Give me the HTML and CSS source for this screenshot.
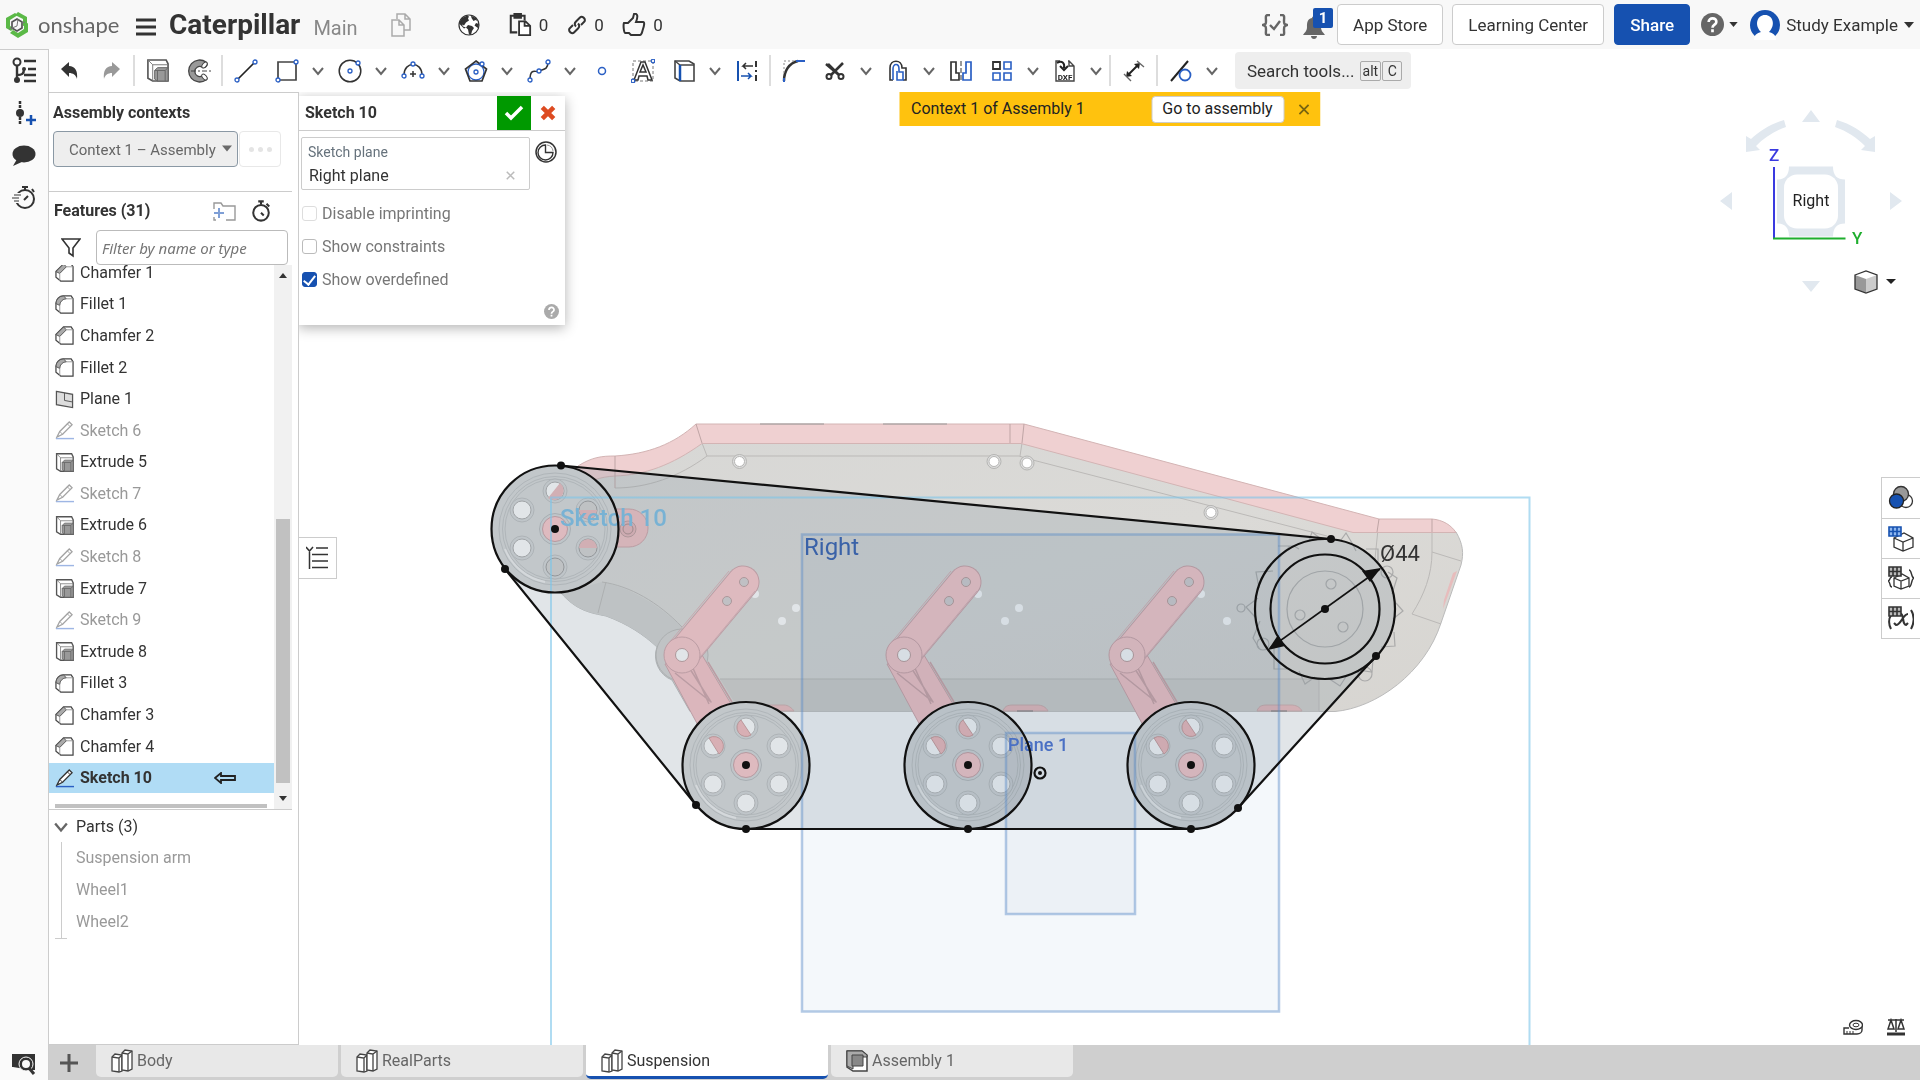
FILE: index.html
```html
<!DOCTYPE html>
<html lang="en">
<head>
<meta charset="utf-8">
<title>Caterpillar | Suspension</title>
<link rel="stylesheet" href="styles.css">
</head>
<body>
<svg class="sprite" aria-hidden="true">
  <symbol id="i-chev" viewBox="0 0 12 12"><path d="M1 3l5 6 5-6" fill="none" stroke="#666" stroke-width="2"/></symbol>
  <symbol id="i-caret" viewBox="0 0 10 6"><path d="M0 0h10L5 6z" fill="#333"/></symbol>
  <symbol id="i-x" viewBox="0 0 12 12"><path d="M1 1l10 10M11 1L1 11" fill="none" stroke="currentColor" stroke-width="2"/></symbol>
  <symbol id="i-extrude" viewBox="0 0 24 24"><path d="M2 1h19l2 4v18H7l-5-3z" fill="#fff" stroke="#555" stroke-width="1.700"/><path d="M2 1l5 5v17M7 6h16" fill="none" stroke="#777"/><path d="M9 12l3-3h11v14H12l-3-2z" fill="#999" stroke="#666"/><path d="M9 12h11v11M20 12l3-3M12 23V12" fill="none" stroke="#666"/></symbol>
  <symbol id="i-fillet" viewBox="0 0 20 20"><path d="M1 9a8 8 0 0 1 8-8h8l2 3v15H6l-5-4z" fill="#fff" stroke="#444" stroke-width="1.300"/><path d="M1 9a8 8 0 0 1 8-8l3 3a7 7 0 0 0-7 7z" fill="#aaa" stroke="#555"/><path d="M12 4h7M5 11v8" fill="none" stroke="#999"/></symbol>
  <symbol id="i-chamfer" viewBox="0 0 20 20"><path d="M1 9l8-8h8l2 3v15H6l-5-4z" fill="#fff" stroke="#444" stroke-width="1.300"/><path d="M1 9l8-8 3 3-7 7z" fill="#aaa" stroke="#555"/><path d="M12 4h7M5 11v8" fill="none" stroke="#999"/></symbol>
  <symbol id="i-plane" viewBox="0 0 20 20"><path d="M1.500 1.500l17 3v14l-17-3z" fill="#ddd" stroke="#555" stroke-width="1.300"/><path d="M10 3v8l8 1.500" fill="none" stroke="#555"/></symbol>
  <symbol id="i-sketch" viewBox="0 0 20 20"><path d="M1 18.500h19" stroke="#2a5fc4" stroke-width="1.500"/><path d="M2 17l3-6L15 1l3 3L8 14z" fill="#fff" stroke="#333" stroke-width="1.300"/><path d="M5 11l3 3M13 3l3 3" stroke="#333"/></symbol>
  <symbol id="i-studio" viewBox="0 0 24 24"><path d="M2 8l3-3 7 1v16l-3 1-7-1z" fill="#fff" stroke="#444" stroke-width="1.300"/><path d="M2 8l7 1v14M9 9l3-3" fill="none" stroke="#444" stroke-width="1.300"/><path d="M12 4l3-3 7 1v18l-4 2-6-1z" fill="#fff" stroke="#444" stroke-width="1.300"/><path d="M12 4l6 1v17M18 5l4-3" fill="none" stroke="#444" stroke-width="1.300"/></symbol>
  <symbol id="i-watch" viewBox="0 0 24 24"><circle cx="12" cy="14" r="8.500" fill="none" stroke="#333" stroke-width="2.200"/><path d="M9 1.500h6M12 2v3M18 4l3 3M12 14l3 3" stroke="#333" stroke-width="2.200" fill="none"/></symbol>
  <symbol id="i-help" viewBox="0 0 24 24"><circle cx="12" cy="12" r="12" fill="currentColor"/><path d="M8 9.500c0-5.500 8.500-5 8 0 0 3-4 2.500-4 6M12 17v3" fill="none" stroke="#fff" stroke-width="2.800"/></symbol>
</svg>

<header class="top">
  <a class="logo" href="#">
    <svg width="26" height="28" viewBox="0 0 26 28"><path d="M11 2L2 7v10l5 3 3-3-4-2V9l8-5z" fill="#5bb947"/><path d="M14 1l9 5v8l-4 1V8l-8-4z" fill="#5bb947"/><path d="M24 12v9l-10 6-8-5 3-3 5 3 6-4v-4z" fill="#5bb947"/><path d="M8 11l5-3 5 3v6l-5 3-5-3z" fill="none" stroke="#555" stroke-width="1.700"/><path d="M8 17l5-2 1-7M5 18l4-1M18 12l3-1" fill="none" stroke="#777"/></svg>
    <span>onshape</span>
  </a>
  <button class="bare menu" aria-label="Menu"><svg width="20" height="20" viewBox="0 0 20 20"><path d="M0 3h20M0 10h20M0 17h20" stroke="#333" stroke-width="3"/></svg></button>
  <h1>Caterpillar</h1><span class="branch">Main</span>
  <button class="bare copy" aria-label="Copy"><svg width="22" height="24" viewBox="0 0 22 24"><path d="M7 6V1h8l5 5v11h-6M15 1v5h5M2 7h7l5 5v11H2zM9 7v5h5" fill="none" stroke="#aaa" stroke-width="1.500"/></svg></button>
  <svg class="globe" width="22" height="22" viewBox="0 0 22 22"><circle cx="11" cy="11" r="10" fill="#fff" stroke="#333" stroke-width="1.200"/><path d="M1.500 8L4 4l5-2.500 2 1-1 2 1 2-3 2-2 3-2-1 1 2 3 1-2 1-4-4zM13 1.500l5 2.500 1.500 3-2-1-2 1-2-3zM10 11l4 1 2 2-2 3-1 4-2-.5-1-5-2-2zM18 9l3 1-1 4-1.500-1-2-1.500z" fill="#333"/></svg>
  <span class="stat"><svg width="24" height="24" viewBox="0 0 24 26"><path d="M17 8V3H2v18h7M6 1h7v4H6z" fill="none" stroke="#333" stroke-width="2.200"/><path d="M11 9h7l5 5v10H11zM17 9v5h5" fill="#fff" stroke="#333" stroke-width="2"/></svg>0</span>
  <span class="stat link"><svg width="20" height="20" viewBox="0 0 20 20"><path d="M9 11.500c-2-2-1-4 0-5l4-4c2-2 6 1 4.500 4L14 10M11 8.500c2 2 1 4 0 5l-4 4c-2 2-6-1-4.500-4L6 10" fill="none" stroke="#333" stroke-width="2"/></svg>0</span>
  <span class="stat"><svg width="24" height="24" viewBox="0 0 24 24"><path d="M2 10h4l5-5 1-4c4-1 4 3 2 8h7c2 0 1 4 0 7s-1 6-3 6H9l-2-2H3c-1 0-2-8-1-10z" fill="none" stroke="#333" stroke-width="2"/></svg>0</span>
  <div class="account">
    <svg width="26" height="22" viewBox="0 0 26 22"><path d="M8 1H6C3 1 4 4 4 7s0 3-3 4c3 1 3 2 3 5s-1 5 2 5h2M18 1h2c3 0 2 3 2 6s0 3 3 4c-3 1-3 2-3 5s1 5-2 5h-2M8 11l4 4 6-8" fill="none" stroke="#666" stroke-width="2.400"/></svg>
    <button class="bare bell" aria-label="Notifications"><svg width="22" height="24" viewBox="0 0 22 24"><path d="M11 1c1 0 2 1 2 2 5 1 5 5 5 9s2 5 4 8H0c2-3 4-4 4-8s0-8 5-9c0-1 1-2 2-2zM8 21h6c0 4-6 4-6 0z" fill="#666"/></svg><b>1</b></button>
    <button class="btn">App Store</button>
    <button class="btn learn">Learning Center</button>
    <button class="btn share">Share</button>
    <button class="bare help" aria-label="Help"><svg width="23" height="23"><use href="#i-help"/></svg><svg width="9" height="5"><use href="#i-caret"/></svg></button>
    <button class="bare user"><svg width="30" height="30" viewBox="0 0 30 30"><circle cx="15" cy="15" r="15" fill="#1651b0"/><path d="M4 30c0-5 3-7 7-8-7-7-4-17 4-17s11 10 4 17c4 1 7 3 7 8z" fill="#fff"/></svg><span>Study Example</span><svg width="10" height="6"><use href="#i-caret"/></svg></button>
  </div>
</header>

<div class="body">
  <nav class="rail" aria-label="Side tools">
    <button class="bare" aria-label="Feature tree"><svg width="26" height="26" viewBox="0 0 26 26"><circle cx="6" cy="5" r="3.500" fill="none" stroke="#333" stroke-width="2"/><path d="M6 8v14M6 18c5 0 7-1 7-6M13 4h12M17 12h8M13 18h12M13 24h12" fill="none" stroke="#333" stroke-width="2.400"/><circle cx="13" cy="12" r="2" fill="#333"/><circle cx="6" cy="23" r="3" fill="#333"/></svg></button>
    <button class="bare" aria-label="Insert version"><svg width="24" height="24" viewBox="0 0 24 24"><path d="M8 0v24" stroke="#333" stroke-width="2.500" stroke-dasharray="3 1"/><circle cx="8" cy="12" r="4" fill="#333"/><path d="M14 19h10M19 14v10" stroke="#1651b0" stroke-width="2.500"/></svg></button>
    <button class="bare" aria-label="Comments"><svg width="24" height="24" viewBox="0 0 24 24"><ellipse cx="12" cy="11" rx="11.500" ry="8.500" fill="#333"/><path d="M5 16l-4 7 11-5z" fill="#333"/></svg></button>
    <button class="bare" aria-label="History"><svg width="24" height="24" viewBox="0 0 24 24"><circle cx="13" cy="14" r="9" fill="none" stroke="#333" stroke-width="2"/><path d="M10 2h6M13 2v3M20 4l2 3M12 15l4-4" stroke="#333" stroke-width="2"/><path d="M2 10h7M0 13h7M2 16h5" stroke="#fafafa" stroke-width="4"/><path d="M2 10h7M0 13h7M2 16h5" stroke="#333"/></svg></button>
    <button class="bare last" aria-label="Search document"><svg width="24" height="22" viewBox="0 0 24 22"><path d="M1 14V2h21v14h-9" fill="#333" stroke="#333" stroke-width="2"/><circle cx="14" cy="11" r="7" fill="#333" stroke="#fafafa"/><circle cx="14" cy="11" r="5" fill="#fafafa" stroke="#333" stroke-width="2"/><path d="M17 15l5 6" stroke="#333" stroke-width="3"/></svg></button>
  </nav>

  <div class="main">
    <div class="toolbar" role="toolbar" aria-label="Sketch tools">
      <button class="t" aria-label="Undo"><svg width="20" height="20" viewBox="0 0 20 20"><path d="M1 8l8-7v4c6 0 9 5 8 13-1-4-4-6-8-6v4z" fill="#333"/></svg></button>
      <button class="t" aria-label="Redo"><svg width="20" height="20" viewBox="0 0 20 20"><path d="M19 8l-8-7v4C5 5 2 10 3 18c1-4 4-6 8-6v4z" fill="#999"/></svg></button>
      <i class="div"></i>
      <button class="t" aria-label="Extrude"><svg width="23" height="23"><use href="#i-extrude"/></svg></button>
      <button class="t" aria-label="Revolve"><svg width="24" height="24" viewBox="0 0 24 24"><path d="M19 3A11 11 0 1 0 19 21C21 19 18 15 15 17A5 5 0 1 1 15 8C18 10 22 6 19 3z" fill="#999" stroke="#444" stroke-width="1.300"/><ellipse cx="17.500" cy="6" rx="2" ry="3.500" transform="rotate(40 17.500 6)" fill="#fff" stroke="#444"/><ellipse cx="17.500" cy="18" rx="2" ry="3.500" transform="rotate(-40 17.500 18)" fill="#fff" stroke="#444"/><path d="M4 12h20" fill="none" stroke="#444" stroke-dasharray="5 2 2 2"/></svg></button>
      <i class="div"></i>
      <button class="t" aria-label="Line"><svg width="24" height="24" viewBox="0 0 24 24"><path d="M4 20L20 4" stroke="#222" stroke-width="1.700"/><g fill="#fff" stroke="#2a5fc4" stroke-width="1.300"><circle cx="3" cy="21" r="2"/><circle cx="21" cy="3" r="2"/></g></svg></button>
      <button class="t" aria-label="Rectangle"><svg width="24" height="24" viewBox="0 0 24 24"><path d="M3 3h18v18H3z" fill="none" stroke="#444" stroke-width="1.700"/><g fill="#fff" stroke="#2a5fc4" stroke-width="1.300"><circle cx="3" cy="21" r="2"/><circle cx="21" cy="3" r="2"/></g></svg></button>
      <button class="c" aria-label="Rectangle options"><svg width="12" height="12"><use href="#i-chev"/></svg></button>
      <button class="t" aria-label="Circle"><svg width="24" height="24" viewBox="0 0 24 24"><circle cx="12" cy="12" r="10.800" fill="none" stroke="#333" stroke-width="1.500"/><g fill="#fff" stroke="#2a5fc4" stroke-width="1.300"><circle cx="12" cy="12" r="2"/><circle cx="20" cy="4" r="2"/></g></svg></button>
      <button class="c" aria-label="Circle options"><svg width="12" height="12"><use href="#i-chev"/></svg></button>
      <button class="t" aria-label="Arc"><svg width="24" height="24" viewBox="0 0 24 24"><path d="M3 16C3 2 21 2 21 16M12 12v6M9 15h6" fill="none" stroke="#333" stroke-width="1.500"/><g fill="#fff" stroke="#2a5fc4" stroke-width="1.300"><circle cx="3" cy="17" r="2"/><circle cx="21" cy="17" r="2"/><circle cx="12" cy="5" r="2"/></g></svg></button>
      <button class="c" aria-label="Arc options"><svg width="12" height="12"><use href="#i-chev"/></svg></button>
      <button class="t" aria-label="Polygon"><svg width="24" height="24" viewBox="0 0 24 24"><circle cx="12" cy="13" r="8" fill="none" stroke="#2a5fc4" stroke-width="1.300"/><path d="M12 2l10.500 8L18 22H6L1.500 10z" fill="none" stroke="#333" stroke-width="1.700"/><g fill="#fff" stroke="#2a5fc4" stroke-width="1.300"><circle cx="12" cy="13" r="2"/><circle cx="18" cy="5" r="2"/></g></svg></button>
      <button class="c" aria-label="Polygon options"><svg width="12" height="12"><use href="#i-chev"/></svg></button>
      <button class="t" aria-label="Spline"><svg width="24" height="24" viewBox="0 0 24 24"><path d="M3 21C3 8 9 14 12 12s9 0 9-9" fill="none" stroke="#333" stroke-width="1.500"/><g fill="#fff" stroke="#2a5fc4" stroke-width="1.300"><circle cx="3" cy="21" r="2"/><circle cx="12" cy="12" r="2"/><circle cx="21" cy="3" r="2"/></g></svg></button>
      <button class="c" aria-label="Spline options"><svg width="12" height="12"><use href="#i-chev"/></svg></button>
      <button class="t" aria-label="Point"><svg width="24" height="24" viewBox="0 0 24 24"><circle cx="12" cy="12" r="3.500" fill="none" stroke="#2a5fc4" stroke-width="1.500"/></svg></button>
      <button class="t" aria-label="Text"><svg width="24" height="24" viewBox="0 0 24 24"><path d="M2 2h20v20H2z" fill="none" stroke="#777" stroke-dasharray="3 2"/><path d="M3 21L10 3h4l7 18h-4l-1-4H8l-1 4zM9 13h6l-3-7z" fill="#fff" stroke="#333" stroke-width="1.500"/><g fill="#fff" stroke="#2a5fc4" stroke-width="1.300"><circle cx="2" cy="22" r="1.800"/><circle cx="22" cy="2" r="1.800"/></g></svg></button>
      <button class="t" aria-label="Use edges"><svg width="22" height="24" viewBox="0 0 22 24"><path d="M2 2h14l5 3v17H7l-5-3z" fill="#fff" stroke="#444" stroke-width="1.600"/><path d="M2 2l5 4h14" fill="none" stroke="#444" stroke-width="1.300"/><path d="M7 6v16" stroke="#1651b0" stroke-width="2.500"/></svg></button>
      <button class="c" aria-label="Use options"><svg width="12" height="12"><use href="#i-chev"/></svg></button>
      <button class="t" aria-label="Construction"><svg width="22" height="24" viewBox="0 0 22 24"><path d="M2 2v20" stroke="#1651b0" stroke-width="2"/><path d="M20 2v20" stroke="#333" stroke-width="2" stroke-dasharray="6 3 2 3"/><path d="M17 7H7l3-3M7 7l3 3" fill="none" stroke="#333" stroke-width="1.500"/><path d="M5 17h10l-3-3M15 17l-3 3" fill="none" stroke="#1651b0" stroke-width="1.500"/></svg></button>
      <i class="div"></i>
      <button class="t" aria-label="Sketch fillet"><svg width="24" height="24" viewBox="0 0 24 24"><path d="M2 22C2 12 7 4 16 2" fill="none" stroke="#333" stroke-width="2.500"/><path d="M14 2h9M2 19v4" stroke="#2a5fc4" stroke-width="2"/><path d="M2 14V2h10" fill="none" stroke="#888" stroke-dasharray="2 2"/></svg></button>
      <button class="t" aria-label="Trim"><svg width="20" height="20" viewBox="0 0 20 20"><path d="M1 3l13 11M6 14L18 2M3 3l11 11" stroke="#333" stroke-width="2.600"/><circle cx="4" cy="15.500" r="2.500" fill="#fff" stroke="#333" stroke-width="2"/><circle cx="16" cy="15.500" r="2.500" fill="#fff" stroke="#333" stroke-width="2"/></svg></button>
      <button class="c" aria-label="Trim options"><svg width="12" height="12"><use href="#i-chev"/></svg></button>
      <button class="t" aria-label="Offset"><svg width="20" height="22" viewBox="0 0 20 22"><path d="M5 20H2V8c0-9 12-9 12 0h4v12h-3" fill="none" stroke="#333" stroke-width="1.600"/><path d="M5 20V9c0-6 6-6 6 0v3h4v8H9v-9" fill="none" stroke="#2a5fc4" stroke-width="1.600"/></svg></button>
      <button class="c" aria-label="Offset options"><svg width="12" height="12"><use href="#i-chev"/></svg></button>
      <button class="t" aria-label="Mirror"><svg width="24" height="24" viewBox="0 0 24 24"><path d="M2 3h5v11h3v7H2z" fill="none" stroke="#333" stroke-width="1.700"/><path d="M12 2v20" stroke="#333" stroke-dasharray="5 2"/><path d="M22 3h-5v11h-3v7h8z" fill="none" stroke="#2a5fc4" stroke-width="1.700"/></svg></button>
      <button class="t" aria-label="Pattern"><svg width="22" height="22" viewBox="0 0 22 22"><path d="M2 2h7v7H2z" fill="none" stroke="#333" stroke-width="1.800"/><path d="M13 2h7v7h-7zM2 13h7v7H2zM13 13h7v7h-7z" fill="none" stroke="#2a5fc4" stroke-width="1.600"/></svg></button>
      <button class="c" aria-label="Pattern options"><svg width="12" height="12"><use href="#i-chev"/></svg></button>
      <button class="t" aria-label="Import DXF"><svg width="22" height="24" viewBox="0 0 22 24"><path d="M6 2H2v20h18V7l-5-5h-1M15 2v5h5" fill="none" stroke="#444" stroke-width="1.400"/><path d="M3 4c5-3 8 0 7 5M6 7l4 4 4-4" fill="none" stroke="#222" stroke-width="2"/><text x="11" y="21" text-anchor="middle" class="dxf">DXF</text></svg></button>
      <button class="c" aria-label="DXF options"><svg width="12" height="12"><use href="#i-chev"/></svg></button>
      <i class="div"></i>
      <button class="t" aria-label="Dimension"><svg width="22" height="22" viewBox="0 0 22 22"><path d="M5 15L15 5" stroke="#222" stroke-width="2"/><path d="M3 17l1-6 5 5zM17 3l-1 6-5-5z" fill="#222"/><path d="M14 1l7 6M1 14l7 7" stroke="#666" stroke-width="1.400"/></svg></button>
      <i class="div"></i>
      <button class="t" aria-label="Constraint"><svg width="24" height="24" viewBox="0 0 24 24"><path d="M2 22L19 2" stroke="#222" stroke-width="2"/><circle cx="16" cy="16" r="5.500" fill="none" stroke="#2a5fc4" stroke-width="1.800"/></svg></button>
      <button class="c" aria-label="Constraint options"><svg width="12" height="12"><use href="#i-chev"/></svg></button>
      <button class="search">Search tools... <kbd>alt</kbd><kbd>C</kbd></button>
    </div>

    <div class="work">
      <aside class="panel">
        <section class="contexts">
          <h2><label for="ctx">Assembly contexts</label></h2>
          <div class="row">
            <div class="pick"><select id="ctx"><option>Context 1 – Assembly</option></select><svg width="10" height="7"><use href="#i-caret"/></svg></div>
            <button class="more" aria-label="More" disabled><i></i><i></i><i></i></button>
          </div>
        </section>
        <section class="features">
          <div class="fhead"><h2>Features (31)</h2>
            <button class="bare" aria-label="Add folder"><svg width="24" height="20" viewBox="0 0 24 20"><path d="M2 8V2h7l2 3h12v14h-9M2 16v3h2" fill="none" stroke="#999" stroke-width="1.400"/><path d="M2 12h10M7 7v10" stroke="#7f9fd6" stroke-width="2"/></svg></button>
            <button class="bare" aria-label="Performance"><svg width="22" height="22"><use href="#i-watch"/></svg></button>
          </div>
          <div class="filter"><svg width="20" height="20" viewBox="0 0 20 20"><path d="M1 1h18l-7 9v8l-4-3v-5z" fill="#fff" stroke="#333" stroke-width="1.600"/></svg><input type="text" aria-label="Filter features" placeholder="Filter by name or type"></div>
          <div class="listwrap">
            <ul class="list">
              <li><svg><use href="#i-chamfer"/></svg>Chamfer 1</li>
              <li><svg><use href="#i-fillet"/></svg>Fillet 1</li>
              <li><svg><use href="#i-chamfer"/></svg>Chamfer 2</li>
              <li><svg><use href="#i-fillet"/></svg>Fillet 2</li>
              <li><svg><use href="#i-plane"/></svg>Plane 1</li>
              <li class="off"><svg><use href="#i-sketch"/></svg>Sketch 6</li>
              <li><svg><use href="#i-extrude"/></svg>Extrude 5</li>
              <li class="off"><svg><use href="#i-sketch"/></svg>Sketch 7</li>
              <li><svg><use href="#i-extrude"/></svg>Extrude 6</li>
              <li class="off"><svg><use href="#i-sketch"/></svg>Sketch 8</li>
              <li><svg><use href="#i-extrude"/></svg>Extrude 7</li>
              <li class="off"><svg><use href="#i-sketch"/></svg>Sketch 9</li>
              <li><svg><use href="#i-extrude"/></svg>Extrude 8</li>
              <li><svg><use href="#i-fillet"/></svg>Fillet 3</li>
              <li><svg><use href="#i-chamfer"/></svg>Chamfer 3</li>
              <li><svg><use href="#i-chamfer"/></svg>Chamfer 4</li>
              <li class="on"><svg><use href="#i-sketch"/></svg>Sketch 10<svg class="arrow" viewBox="0 0 22 12"><path d="M1 6l6-5v3h14v4H7v3z" fill="none" stroke="#222" stroke-width="1.800"/></svg></li>
            </ul>
            <div class="hbar"></div>
            <div class="vbar"><svg class="up" width="8" height="5"><use href="#i-caret"/></svg><i></i><svg width="8" height="5"><use href="#i-caret"/></svg></div>
          </div>
        </section>
        <section class="parts">
          <h3><svg width="14" height="14"><use href="#i-chev"/></svg>Parts (3)</h3>
          <ul><li>Suspension arm</li><li>Wheel1</li><li>Wheel2</li></ul>
        </section>
      </aside>

      <main class="view">
        <svg class="scene" viewBox="299 92 1621 953" preserveAspectRatio="xMidYMid slice">
          <defs>
            <linearGradient id="plate" x1="0" y1="0" x2="1" y2="1"><stop offset="0" stop-color="#d7d7d5"/><stop offset=".5" stop-color="#dbdad7"/><stop offset="1" stop-color="#d7d5d1"/></linearGradient>
            <g id="rim"><circle r="64" fill="#d6d8d8"/><g fill="none" stroke="#bfc1c2"><circle r="56"/><circle r="52.500"/><circle r="50"/></g><path d="M-50 20A54 54 0 0 0-10 53" fill="none" stroke="#eee" stroke-width="2"/></g>
            <g id="bores" stroke="#bcbebf"><g fill="#d3d5d6"><circle cy="-38" r="12"/><circle cy="38" r="12"/><circle cx="-33" cy="-19" r="12"/><circle cx="-33" cy="19" r="12"/><circle cx="33" cy="-19" r="12"/><circle cx="33" cy="19" r="12"/></g></g>
            <g id="hub"><circle r="15.500" fill="#d3d5d6" stroke="#b4b7b9"/><circle r="12.500" fill="#fbc7ca" stroke="#c79ca0"/></g>
            <g id="arm" stroke-linejoin="round">
              <path d="M-81-101L-44-110-12-56-46-36z" fill="#f7c2c6" stroke="#cda0a5"/>
              <path d="M-71-92l36 29-28-44M-60-103l6 4 17 38M-38-103l24 40" fill="none" stroke="#cda0a5" stroke-width="1.500"/>
              <path d="M-64-110L-3-183" stroke="#cda0a5" stroke-width="33" stroke-linecap="round"/>
              <path d="M-64-110L-3-183" stroke="#fbc7ca" stroke-width="31" stroke-linecap="round"/>
              <path d="M-50-103L9-174M-77-122L-17-194" fill="none" stroke="#dcb0b5"/>
              <circle cx="-64" cy="-110" r="18" fill="#f9c5c8" stroke="#cda0a5"/>
              <circle cx="-64" cy="-110" r="6.500" fill="#fff" stroke="#b99"/>
              <g fill="#d4cfd0" stroke="#b99"><circle cx="-2" cy="-183" r="4.500"/><circle cx="-19" cy="-164" r="4.500"/></g>
            </g>
            <g id="wheel">
              <use href="#rim"/><use href="#bores"/>
              <g fill="#fff" stroke="#bbb"><circle cy="-38" r="9"/><circle cy="38" r="9"/><circle cx="-33" cy="-19" r="9"/><circle cx="-33" cy="19" r="9"/><circle cx="33" cy="-19" r="9"/><circle cx="33" cy="19" r="9"/></g>
              <path d="M-5-45a9 9 0 0 0 10 15zM-37-27l10 16a9 9 0 0 0-10-16z" fill="#f4b8bb" stroke="#c99"/>
              <use href="#hub"/>
            </g>
          </defs>

          <path d="M561 593C577 611 591 613 606 616 628 624 644 635 657 647A26 26 0 0 0 672 680L690 711.500H1335C1376 708 1425 673 1441 623L1461 565C1464 553 1463 544 1456 532L1353 531 1022 443H702C675 462 640 474 600 477L560 480z" fill="url(#plate)" stroke="#bbb"/>
          <path d="M720 679H1319V711.500H740z" fill="#cfcecb"/>
          <path d="M561 593C577 611 591 613 606 616 628 624 644 635 657 647L682 627C655 602 630 588 602 582z" fill="#d1d2d0"/>
          <path d="M602 582c28 4 56 20 80 45M606 582l-8 31M720 679h599v32M707 456h312l6 2 302 78M707 456c-28 21-60 32-92 32M702 443l5 13M1022 443l-2 13M1379 519l-4 40M1432 519v33l29 9M1432 552c0 23-8 43-20 62l29 10" fill="none" stroke="#bbb9b7"/>
          <circle cx="682" cy="655" r="26" fill="#d4d3d1" stroke="#b9b8b6"/>
          <path d="M578 466C592 457 602 456 615 456 648 454 674 444 696 424H1024L1379 519H1432C1443 520 1451 525 1456 532.500H1353L1021 443.500H702C672 465 645 475 615 476 600 477 590 480 575 491z" fill="#efd0d1" stroke="#d3b4b4"/>
          <path d="M760 424h64M883 424h64" stroke="#999"/><path d="M696 424l6 19M615 456v32M1010 424v19M1024 424l-2 19M1379 519l-2 13M1432 519v13" fill="none" stroke="#bfa5a5"/>
          <path d="M1457 571l-4 2-9 27-1 9z" fill="#e7bcbc"/>
          <g fill="#fff" stroke="#b5b5b3"><circle cx="739.500" cy="461.500" r="7" fill="#ddd"/><circle cx="739.500" cy="461.500" r="5"/><circle cx="994" cy="461.500" r="7" fill="#ddd"/><circle cx="994" cy="461.500" r="5"/><circle cx="1027" cy="463" r="7" fill="#ddd"/><circle cx="1027" cy="463" r="5"/><circle cx="1211" cy="512.500" r="7" fill="#ddd"/><circle cx="1211" cy="512.500" r="5"/></g>
          <g fill="#fff"><circle cx="755" cy="594" r="4"/><circle cx="796" cy="608" r="4"/><circle cx="782" cy="621" r="4"/><circle cx="978" cy="594" r="4"/><circle cx="1019" cy="608" r="4"/><circle cx="1005" cy="621" r="4"/><circle cx="1201" cy="594" r="4"/><circle cx="1227" cy="621" r="4"/></g>
          <g fill="#eab9bb" stroke="#caa"><path d="M760 711c2-6 6-6 12-6h12c4 0 8 3 10 6zM1003 711c2-6 6-6 12-6h22c5 0 9 2 11 6zM1257 711c2-6 6-6 12-6h22c5 0 9 2 11 6z"/></g><path d="M1017 711h16M1271 711h16" stroke="#777"/>
          <path d="M605 509h24a19 19 0 0 1 0 38h-24z" fill="#f0bfc2" stroke="#cda0a5"/><circle cx="628" cy="529" r="8" fill="#e5b3b7" stroke="#b99"/><circle cx="628" cy="529" r="5" fill="none" stroke="#a88"/>
          <use href="#arm" x="746" y="765"/><use href="#arm" x="968" y="765"/><use href="#arm" x="1191" y="765"/>
          <use href="#wheel" x="746" y="765"/><use href="#wheel" x="968" y="765"/><use href="#wheel" x="1191" y="765"/>
          <g transform="translate(555 529)"><use href="#rim"/><use href="#bores"/>
            <g fill="#fff" stroke="#aaa"><circle cx="-33" cy="-19" r="9"/><circle cx="-33" cy="19" r="9"/><circle cy="-38" r="9"/></g>
            <g fill="#d3d1d0" stroke="#999"><circle cy="38" r="9"/><circle cx="33" cy="-19" r="9"/><circle cx="33" cy="19" r="9"/></g>
            <path d="M-7-31a9 9 0 1 0 12-15zM24-19h18a9 9 0 0 1-18 0zM24 19h18a9 9 0 0 0-18 0z" fill="#eab9bb"/><use href="#hub"/></g>
          <g fill="none" stroke="#aaa" stroke-width="1.200" transform="translate(1325 609)"><circle r="38"/><circle cx="6" cy="-25" r="5"/><circle cx="-25" cy="6" r="5"/><circle cx="18" cy="18" r="5"/>
            <path d="M-47-63h16l5 3M-16-68l3-9 9 7M16-69l5-7 6 10 4 8M41-60h12v13M63-37l9 6-5 16M71-6l7 8-10 8M69 23l1 14-14 1M48 50l-1 13-14-2M22 66l-7 11-12-8M-10 68l-10 7-6-13M-38 60h-13V39M-66 39l-6-10 7-17M-70 8l-9-10 12-9M-66-21l-3-16 17-1M-45-52l10-11"/><circle cx="-84" cy="-1" r="4"/><circle cx="62" cy="-37" r="6"/><circle cx="-62" cy="35" r="6"/><circle cx="40" cy="65" r="7"/></g>

          <path d="M561 465.500L1331 539A70 70 0 0 1 1376 656L1238 808A64 64 0 0 1 1191 829H746A64 64 0 0 1 696 805L505 569A64 64 0 0 1 561 465.500z" fill="#82929f" fill-opacity=".24"/>
          <path d="M551 1050V497.500H1529.500V1050" fill="none" stroke="#7cc4ea" stroke-opacity=".6" stroke-width="2"/>
          <path class="mul" d="M802 534.500h477v477H802z" fill="#f4f8fb"/>
          <path class="mul" d="M1006 733h129v181h-129z" fill="#f7f8fa"/>
          <path d="M802 534.500h477v477H802zM1006 733h129v181h-129z" fill="none" stroke="#5a8cc8" stroke-opacity=".45" stroke-width="2.500"/>
          <text x="560" y="526" class="lab sk">Sketch 10</text>
          <text x="804" y="555" class="lab rt">Right</text>
          <text x="1008" y="751" class="lab pl">Plane 1</text>
          <g fill="none" stroke="#111" stroke-width="2.200">
            <path d="M561 465.500L1331 539M505 569l191 236M746 829h445M1238 808l138-152"/>
            <circle cx="555" cy="529" r="63.500"/><circle cx="746" cy="765.500" r="63.500"/><circle cx="968" cy="765.500" r="63.500"/><circle cx="1191" cy="765.500" r="63.500"/>
            <circle cx="1325" cy="609" r="70"/><circle cx="1325" cy="609" r="54.500"/>
            <path d="M1270 648l110-79" stroke-width="1.600"/>
            <circle cx="1040" cy="773" r="5.500"/>
          </g>
          <path d="M1381 568l-11 14-8-11zM1268 650l17-4-7-11z" fill="#111"/>
          <g fill="#111"><circle cx="561" cy="465.500" r="4"/><circle cx="1331" cy="539" r="4"/><circle cx="505" cy="569" r="4"/><circle cx="696" cy="805" r="4"/><circle cx="746" cy="829" r="4"/><circle cx="968" cy="829" r="4"/><circle cx="1191" cy="829" r="4"/><circle cx="1238" cy="808" r="4"/><circle cx="1376" cy="656" r="4"/><circle cx="555" cy="529" r="4"/><circle cx="746" cy="765" r="4"/><circle cx="968" cy="765" r="4"/><circle cx="1191" cy="765" r="4"/><circle cx="1325" cy="609" r="4"/><circle cx="1040" cy="773" r="2"/></g>
          <text x="1380" y="561" class="lab dim">Ø44</text>
        </svg>

        <div class="notice"><span>Context 1 of Assembly 1</span><button>Go to assembly</button><button class="bare" aria-label="Dismiss"><svg width="11" height="11"><use href="#i-x"/></svg></button></div>

        <form class="dialog">
          <div class="dhead"><b>Sketch 10</b>
            <button type="button" class="ok" aria-label="Accept"><svg width="20" height="16" viewBox="0 0 20 16"><path d="M2 8l5 5L18 2" fill="none" stroke="#fff" stroke-width="3.500"/></svg></button>
            <button type="button" class="bare no" aria-label="Cancel"><svg width="16" height="16" viewBox="0 0 14 14"><path d="M2 2l10 10M12 2L2 12" stroke="#dd4b21" stroke-width="4"/></svg></button>
          </div>
          <div class="planerow">
            <div class="plane"><label for="pl">Sketch plane</label><div><input id="pl" type="text" value="Right plane"><button type="button" class="bare" aria-label="Clear"><svg width="9" height="9"><use href="#i-x"/></svg></button></div></div>
            <svg width="22" height="22" viewBox="0 0 22 22"><circle cx="11" cy="11" r="10" fill="#fff" stroke="#333" stroke-width="1.500"/><path d="M10.500 4v7.500H18A7.500 7.500 0 1 1 10.500 4z" fill="#fff" stroke="#333" stroke-width="1.400"/><path d="M12 4a7 7 0 0 1 6 6" fill="none" stroke="#999"/></svg>
          </div>
          <label class="ck"><input type="checkbox" disabled>Disable imprinting</label>
          <label class="ck"><input type="checkbox">Show constraints</label>
          <label class="ck"><input type="checkbox" checked>Show overdefined</label>
          <button type="button" class="bare dhelp" aria-label="Help"><svg width="15" height="15"><use href="#i-help"/></svg></button>
        </form>

        <button class="handle" aria-label="Toggle list"><svg width="22" height="24" viewBox="0 0 22 24"><path d="M0 1l3.500 4L7 1M10 2h12M3.500 6v17M6 8.500h16M6 15h16M6 21.500h16" fill="none" stroke="#333" stroke-width="1.500"/></svg></button>

        <svg class="cube" width="190" height="200" viewBox="1715 105 190 200">
          <g fill="#e1e8ef"><path d="M1811 110l9 12h-18zM1811 292l9-11h-18zM1720 201l12-9v18zM1902 201l-12-9v18z"/><path d="M1789 166.500h44c0 9 4 13 12 13v44c-8 0-12 4-12 13h-44c0-9-4-13-12-13v-44c8 0 12-4 12-13z"/><path d="M1784 120c-14 4-24 11-33 19l-5-3v16l14-2-4-4c8-8 18-15 30-19zM1837 120c14 4 24 11 33 19l5-3v16l-14-2 4-4c-8-8-18-15-30-19z"/></g>
          <rect x="1784" y="174.500" width="54" height="54" rx="13" fill="#fff"/>
          <path d="M1774 167v71.500" stroke="#3a3ae0" stroke-width="2"/><path d="M1773 238.500h72.500" stroke="#1fae2e" stroke-width="2"/>
          <text x="1811" y="206" text-anchor="middle" class="face">Right</text><text x="1769" y="161" class="ax z">Z</text><text x="1852" y="244" class="ax y">Y</text>
          <path d="M1855 275l11-4 11 4v14l-11 4-11-4z" fill="#fff"/><path d="M1855 275l11 4v14l-11-4z" fill="#999"/><path d="M1866 279l11-4v14l-11 4z" fill="#ccc"/><path d="M1855 275l11-4 11 4v14l-11 4-11-4z" fill="none" stroke="#333" stroke-width="1.300"/><path d="M1886 279h10l-5 5z" fill="#222"/>
        </svg>

        <div class="side">
          <button aria-label="Appearance"><svg viewBox="0 0 26 26"><circle cx="18" cy="16" r="6.500" fill="#fff" stroke="#333" stroke-width="1.300"/><circle cx="13" cy="9" r="7.500" fill="#999" stroke="#333" stroke-width="1.300"/><circle cx="8.500" cy="16" r="7" fill="#1651b0" stroke="#222" stroke-width="1.300"/></svg></button>
          <button aria-label="Configurations"><svg viewBox="0 0 26 26"><path d="M6 12l10-5 9 5v9l-10 4-9-4zM6 12l9 4 10-4M15 16v9" fill="#fff" stroke="#333" stroke-width="1.300"/><path d="M1 1h12v9H1z" fill="#8fb8f0" stroke="#1651b0" stroke-width="1.600"/><path d="M5 1v9M9 1v9M1 5.500h12" stroke="#1651b0" stroke-width="1.600"/></svg></button>
          <button aria-label="Custom table"><svg viewBox="0 0 26 26"><path d="M6 12l8-4 7 4v8l-8 3-7-3zM6 12l7 3 8-3M13 15v8" fill="#fff" stroke="#333" stroke-width="1.300"/><path d="M4 11c-3 0-1 3-4 4 3 1 1 6 4 6M21 4c3 0 2 8 5 8-3 1-2 9-5 9" fill="none" stroke="#333" stroke-width="1.400"/><path d="M1 1h12v9H1z" fill="#bbb" stroke="#333" stroke-width="1.600"/><path d="M5 1v9M9 1v9M1 5.500h12" stroke="#333" stroke-width="1.600"/></svg></button>
          <button aria-label="Variables"><svg viewBox="0 0 26 26"><path d="M3 9c-3 5-2 10 0 14M23 4c4 6 3 14 0 19" fill="none" stroke="#333" stroke-width="2"/><path d="M13 8c3 0 1 11 5 11l2-2M20 8c-5 0-7 11-12 11l-2-2" fill="none" stroke="#333" stroke-width="2.200"/><path d="M1 1h12v9H1z" fill="#bbb" stroke="#333" stroke-width="1.600"/><path d="M5 1v9M9 1v9M1 5.500h12" stroke="#333" stroke-width="1.600"/></svg></button>
        </div>

        <div class="measure">
          <button class="bare" aria-label="Measure"><svg width="20" height="16" viewBox="0 0 20 16"><path d="M6 9H1v6h13c3 0 5-2 5-4V6" fill="#fff" stroke="#333" stroke-width="1.400"/><ellipse cx="13" cy="6" rx="6.500" ry="4.500" fill="#fff" stroke="#333" stroke-width="1.400"/><ellipse cx="13" cy="6" rx="3" ry="1.800" fill="#fff" stroke="#333"/><path d="M4 15v-3M7 15v-3M10 15v-3" stroke="#333"/></svg></button>
          <button class="bare" aria-label="Mass properties"><svg width="18" height="18" viewBox="0 0 18 18"><path d="M1 2h16M9 1v13M4 2l-3 9h6zM14 2l-3 9h6z" fill="none" stroke="#333" stroke-width="1.500"/><path d="M0 16h18" stroke="#333" stroke-width="3"/></svg></button>
        </div>
      </main>
    </div>

    <nav class="tabs" aria-label="Document tabs">
      <button class="add" aria-label="Add tab"><svg width="18" height="18" viewBox="0 0 18 18"><path d="M0 9h18M9 0v18" stroke="#555" stroke-width="3"/></svg></button>
      <a href="#"><svg><use href="#i-studio"/></svg>Body</a>
      <a href="#"><svg><use href="#i-studio"/></svg>RealParts</a>
      <a href="#" class="cur"><svg><use href="#i-studio"/></svg>Suspension</a>
      <a href="#"><svg viewBox="0 0 24 24"><path d="M2 2h15l5 4v16H8l-6-4z" fill="#fff" stroke="#444" stroke-width="1.500"/><path d="M2 2h15l5 4v2h-4v-1H8v13l-6-3z" fill="#aaa" stroke="#444"/><path d="M7 6h11v11H7z" fill="#888" stroke="#444"/></svg>Assembly 1</a>
    </nav>
  </div>
</div>
</body>
</html>
```
FILE: styles.css
```css
* { box-sizing: border-box; }
html, body { height: 100%; margin: 0; }
body { display: flex; flex-direction: column; font: 16px/20px Roboto, "Open Sans", sans-serif; color: #333; background: #fff; overflow: hidden; }
button, input, select { font: inherit; color: inherit; }
button { cursor: pointer; padding: 0; }
svg { display: block; flex: none; }
h1, h2, h3, ul { margin: 0; padding: 0; list-style: none; }
.sprite { position: absolute; width: 0; height: 0; }
.bare { border: 0; background: none; display: flex; align-items: center; }

.top { flex: none; height: 49px; background: #f8f8f8; display: flex; align-items: center; padding: 0 6px 0 4px; white-space: nowrap; font-size: 17px; }
.logo { display: flex; align-items: center; gap: 8px; color: #666; text-decoration: none; font: 22px/28px Lato, sans-serif; width: 132px; }
.menu { width: 33px; margin-top: 4px; }
h1 { font-size: 28px; line-height: 32px; }
.branch { font-size: 20px; color: #888; margin-left: 13px; padding-top: 6px; }
.copy { margin-left: 32px; }
.globe { margin-left: 46px; }
.stat { display: flex; align-items: center; gap: 7px; margin-left: 28px; min-width: 40px; }
.stat + .stat { margin-left: 17px; }
.stat.link svg { margin-left: 2px; }
.account { margin-left: auto; display: flex; align-items: center; }
.bell { position: relative; margin: 4px 12px 0 15px; }
.bell b { position: absolute; left: 10px; top: -7px; width: 20px; height: 20px; border-radius: 2px; background: #1651b0; color: #fff; font-size: 15px; line-height: 20px; text-align: center; }
.btn { height: 41px; width: 106px; border: 1px solid #ccc; border-radius: 4px; background: #fff; margin-right: 9px; }
.btn.learn { width: 152px; margin-right: 10px; }
.btn.share { width: 76px; margin-right: 11px; background: #1651b0; border-color: #1651b0; color: #fff; font-weight: 500; }
.help { gap: 5px; color: #666; margin-right: 12px; }
.user { gap: 6px; }

.body { flex: 1; min-height: 0; display: flex; }
.rail { width: 49px; flex: none; background: #fafafa; border-right: 1px solid #ccc; border-top: 1px solid #ccc; display: flex; flex-direction: column; align-items: center; padding: 7px 0 5px; gap: 18px; }
.rail .last { margin-top: auto; }
.main { flex: 1; min-width: 0; display: flex; flex-direction: column; }

.toolbar { height: 43px; flex: none; display: flex; align-items: center; }
.toolbar .t, .toolbar .c { height: 40px; border: 0; background: none; display: flex; align-items: center; justify-content: center; width: 41px; }
.toolbar .c { width: 22px; }
.div { width: 2px; height: 31px; background: #ddd; margin: 0 2px; }
.dxf { font: bold 8px Roboto, sans-serif; fill: #222; }
.search { height: 37px; width: 176px; margin-left: 12px; padding-left: 12px; border: 0; border-radius: 4px; background: #eee; display: flex; align-items: center; font-size: 17px; white-space: nowrap; }
kbd { font: 14px/18px Roboto, sans-serif; border: 1px solid #aaa; border-radius: 2px; padding: 0 2px; margin-left: 1px; min-width: 20px; text-align: center; }
kbd:first-of-type { margin-left: 5px; }

.work { flex: 1; min-height: 0; display: flex; }
.panel { width: 250px; flex: none; border: 1px solid #ccc; border-left: 0; display: flex; flex-direction: column; }
h2 { font-size: 16px; line-height: 20px; }
.contexts { width: 243px; height: 99px; border-bottom: 1px solid #ccc; padding: 10px 0 0 4px; }
.contexts .row { display: flex; gap: 1px; margin-top: 8px; }
.pick { position: relative; width: 185px; }
.pick svg { position: absolute; right: 6px; top: 14px; opacity: .7; }
.pick select { appearance: none; width: 100%; height: 36px; padding: 1px 16px 0 15px; border: 1px solid #8a98a4; border-radius: 4px; background: #eee; color: #666; font-size: 15px; }
.more { width: 42px; height: 36px; border: 1px solid #e8e8e8; border-radius: 4px; background: #fff; display: flex; align-items: center; justify-content: center; gap: 4px; }
.more i { width: 5px; height: 5px; border-radius: 50%; background: #e4e4e4; }
.features { width: 243px; display: flex; flex-direction: column; border-bottom: 1px solid #ccc; height: 618px; }
.fhead { display: flex; align-items: center; padding: 7px 20px 7px 5px; height: 38px; gap: 14px; }
.fhead h2 { flex: 1; }
.filter { display: flex; align-items: center; gap: 15px; padding: 0 4px 0 12px; }
.filter input { flex: 1; min-width: 0; height: 35px; border: 1px solid #bbb; border-radius: 4px; padding: 0 5px; font: italic 15px/20px "Noto Sans", "Open Sans", sans-serif; }
.filter input::placeholder { color: #757575; opacity: 1; }
.listwrap { flex: 1; min-height: 0; display: grid; grid-template-columns: 1fr 18px; grid-template-rows: 1fr 5px; overflow: hidden; }
.list { display: grid; grid-auto-rows: 1fr; height: 537px; margin-top: -8px; }
.list li { display: flex; align-items: center; gap: 6px; padding-left: 6px; }
.list svg { width: 19px; height: 19px; }
.list .off { color: #999; }
.list .off svg { opacity: .45; }
.list .on { background: #b0dcf5; font-weight: bold; margin: 1px 0; }
.list .arrow { width: 22px; height: 12px; margin: 0 38px 0 auto; }
.hbar { background: #c1c1c1; margin: 0 7px 1px 6px; }
.vbar { grid-column: 2; grid-row: 1 / 3; background: #f1f1f1; display: flex; flex-direction: column; align-items: center; padding: 8px 0; }
.vbar i { width: 14px; height: 264px; background: #c1c1c1; margin-top: auto; margin-bottom: 13px; }
.up { transform: rotate(180deg); }
.parts { padding: 6px 5px; }
.parts h3 { font-size: 16px; font-weight: normal; display: flex; gap: 8px; align-items: center; height: 22px; }
.parts ul { margin: 4px 0 0 7px; border-left: 1px solid #ccc; padding-left: 14px; color: #999; }
.parts li { height: 32px; line-height: 31px; }
.parts ul::after { content: ""; display: block; width: 12px; height: 1px; background: #ccc; margin-left: -21px; }

.view { flex: 1; min-width: 0; position: relative; overflow: hidden; }
.scene { position: absolute; inset: 0; width: 100%; height: 100%; }
.mul { mix-blend-mode: multiply; }
.lab { font-family: Roboto, sans-serif; font-weight: 500; }
.sk { font-size: 24px; fill: #78b2d4; }
.rt { font-size: 24px; fill: #3a62a8; font-weight: 400; }
.pl { font-size: 18px; fill: #4a70c4; }
.dim { font-size: 22px; fill: #333; font-weight: 400; }
.notice { position: absolute; left: 50%; top: 0; transform: translateX(-50%); width: 421px; height: 34px; background: #ffc20e; display: flex; align-items: center; padding: 0 11px 0 12px; color: #222; }
.notice span { flex: 1; }
.notice button { width: 133px; height: 27px; border: 1px solid #ccc; border-radius: 4px; background: #fff; }
.notice .bare { width: 11px; border: 0; background: none; margin-left: 14px; color: #7a6510; }
.dialog { position: absolute; left: -1px; top: 4px; width: 267px; height: 229px; background: #fff; box-shadow: 0 3px 12px rgba(0,0,0,.3); }
.dhead { display: flex; height: 35px; border-bottom: 1px solid #ccc; align-items: center; padding-left: 7px; }
.dhead b { flex: 1; }
.ok { width: 34px; height: 34px; border: 0; background: #090; display: flex; align-items: center; justify-content: center; }
.no { width: 34px; justify-content: center; }
.planerow { display: flex; gap: 5px; padding: 6px 3px 7px; }
.planerow > svg { margin-top: 4px; }
.plane { width: 229px; height: 53px; border: 1px solid #ccc; border-radius: 2px; padding: 4px 14px 0 6px; }
.plane label { display: block; font-size: 14px; color: #66727c; }
.plane div { display: flex; }
.plane input { border: 0; padding: 0 1px; flex: 1; min-width: 0; height: 26px; outline: 0; background: none; }
.plane button { color: #bbb; }
.ck { display: flex; align-items: center; gap: 5px; height: 33px; padding-left: 4px; color: #777; }
.ck input { appearance: none; width: 15px; height: 15px; margin: 0; border: 1px solid #bbb; border-radius: 3px; background: #fff; }
.ck input:disabled { border-color: #ddd; }
.ck input:checked { border-color: #1651b0; background: #1651b0; display: grid; place-items: center; }
.ck input:checked::after { content: ""; width: 5px; height: 10px; border: solid #fff; border-width: 0 2px 2px 0; transform: rotate(38deg); margin-top: -2px; }
.dhelp { position: absolute; right: 6px; bottom: 6px; color: #aaa; }
.handle { position: absolute; left: -1px; top: 445px; width: 39px; height: 42px; border: 1px solid #ccc; border-left: 0; background: #fff; display: flex; align-items: center; justify-content: center; }
.cube { position: absolute; right: 15px; top: 13px; }
.face { font: 16px Roboto, sans-serif; fill: #222; }
.ax { font: 500 17px Roboto, sans-serif; }
.z { fill: #3a3ae0; }
.y { fill: #1fae2e; }
.side { position: absolute; right: 0; top: 385px; width: 39px; border: 1px solid #ccc; border-right: 0; background: #fff; }
.side button { display: flex; width: 100%; height: 40px; border: 0; background: none; align-items: center; justify-content: center; }
.side button + button { border-top: 1px solid #ccc; }
.side svg { width: 26px; height: 26px; }
.measure { position: absolute; right: 15px; bottom: 9px; display: flex; gap: 24px; align-items: center; }

.tabs { flex: none; height: 35px; background: #cfcfcf; display: flex; align-items: flex-start; gap: 3px; }
.tabs .add { width: 44px; height: 35px; border: 0; background: none; display: flex; align-items: center; padding-left: 11px; }
.tabs a { width: 242px; height: 32px; background: #e8e8e8; border-radius: 0 0 5px 5px; display: flex; align-items: center; gap: 3px; padding-left: 14px; color: #666; text-decoration: none; }
.tabs a svg { width: 24px; height: 24px; }
.tabs .cur { background: #fff; color: #333; height: 34px; border-bottom: 3px solid #1651b0; }
```
